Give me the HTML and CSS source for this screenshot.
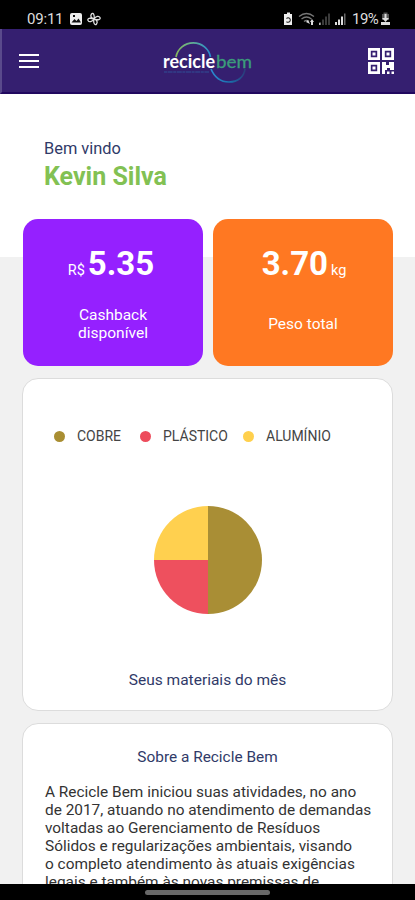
FILE: index.html
```html
<!DOCTYPE html>
<html lang="pt-BR">
<head>
  <meta charset="UTF-8">
  <meta name="viewport" content="width=device-width, initial-scale=1.0">
  <title>Recicle Bem</title>
  <link rel="stylesheet" href="styles.css">
</head>
<body>
  <div class="status-bar">
    <span class="clock">09:11</span>
    <svg class="status-left" width="34" height="16" viewBox="0 0 34 16">
      <rect x="1" y="2" width="12" height="12" rx="2" fill="#eee"/>
      <path d="M2.5 11.5 5.5 8l2 2 2-2.5 2.5 4z" fill="#111"/>
      <rect x="4" y="4" width="2" height="2" fill="#111"/>
      <g fill="none" stroke="#ddd" stroke-width="1.3">
        <path d="M25 8c-3-1-4-3-2.500-5S26 4 25 8c2-3 5-3.500 6-1.500S29 9.500 25 8c3 1 4 3 2.500 5S24 12 25 8c-2 3-5 3.500-6 1.500S21 6.500 25 8"/>
      </g>
    </svg>
    <svg class="status-right" width="68" height="16" viewBox="0 0 68 16">
      <path d="M3 3h2V1.500h3V3h2v11H2V3z" fill="#eee"/>
      <path d="M4.500 7.500a2.200 2.200 0 1 1 0 3" fill="none" stroke="#222" stroke-width="1.100"/>
      <g fill="none" stroke="#777" stroke-width="1.300">
        <path d="M17 5.500q7.500-6 15 0M19.500 8q5-4 10 0M22 10.500q2.500-2 5 0"/>
      </g>
      <path d="M24 11l2-2 2 4zM30 8l2 3h-1v3h-2v-3h-1z" fill="#ddd"/>
      <path d="M37 11h2v3h-2zM40 8.500h2V14h-2zM43 5.500h2V14h-2zM46 2.500h2V14h-2z" fill="#3b3b3b"/>
      <path d="M37 12h1.500v2H37z" fill="#bbb"/>
      <path d="M53 11h2v3h-2zM56 8.500h2V14h-2zM59 5.500h2V14h-2z" fill="#ddd"/>
      <path d="M62 2.500h1.500V14H62z" fill="#666"/>
    </svg>
    <span class="battery">19%</span>
    <svg class="battery-icon" width="9" height="14" viewBox="0 0 9 14">
      <path d="M2.500 2V.5h4V2H8v6H1V2z" fill="#555"/>
      <path d="M3.500 2h2v4H8L4.500 10 1 6h2.500zM0 10h9v3H0z" fill="#ddd"/>
    </svg>
  </div>

  <header>
    <svg class="menu" width="20" height="16" viewBox="0 0 20 16">
      <path d="M0 2h20M0 8h20M0 14h20" stroke="#fff" stroke-width="2"/>
    </svg>
    <svg class="logo" width="96" height="50" viewBox="0 0 96 50">
      <defs>
        <linearGradient id="arc-top" x1="0" x2="1">
          <stop offset="0" stop-color="#86b85c"/>
          <stop offset=".5" stop-color="#5fae97"/>
          <stop offset="1" stop-color="#2689ce"/>
        </linearGradient>
        <linearGradient id="arc-bottom" x1="0" x2="1">
          <stop offset="0" stop-color="#2b8bd2"/>
          <stop offset=".6" stop-color="#1a6ca8"/>
          <stop offset="1" stop-color="#2b3c7b"/>
        </linearGradient>
      </defs>
      <path d="M16 20a17.500 17 0 0 1 34.500 0" fill="none" stroke="url(#arc-top)" stroke-width="1.700"/>
      <path d="M51 32c3 7 9 13 18 13s15-5 16-13" fill="none" stroke="url(#arc-bottom)" stroke-width="1.700"/>
      <text class="logo-text" x="3" y="30.500" textLength="52" lengthAdjust="spacingAndGlyphs" fill="#fff">recicle</text>
      <text class="logo-text light" x="56" y="30.500" textLength="36" lengthAdjust="spacingAndGlyphs" fill="#3b9b7b">bem</text>
      <path d="M4 35h45" stroke="#315096" stroke-width="1" stroke-dasharray="3 .6 5 .6"/>
    </svg>
    <svg class="qr" width="28" height="28" viewBox="0 0 28 28">
      <g fill="none" stroke="#fff" stroke-width="2.800">
        <path d="M2.400 2.400h9.200v9.200H2.400zM16.400 2.400h9.200v9.200h-9.200zM2.400 16.400h9.200v9.200H2.400z"/>
      </g>
      <path d="M5.500 5.500h3v3h-3zM19.500 5.500h3v3h-3zM5.500 19.500h3v3h-3zM15 15h4v3h3v-3h5v8h-4v-2h-3v2h-2v4h-3zM20 24.500h2.500V27H20zM24.500 24.500H27V27h-2.500z" fill="#fff"/>
    </svg>
  </header>

  <main>
    <section class="welcome">
      <p class="hello">Bem vindo</p>
      <h1>Kevin Silva</h1>
    </section>

    <div class="totals">
      <section class="total cashback">
        <p class="value"><small>R$</small><b>5.35</b></p>
        <p class="label">Cashback<br>disponível</p>
      </section>
      <section class="total weight">
        <p class="value"><b>3.70</b><small>kg</small></p>
        <p class="label">Peso total</p>
      </section>
    </div>

    <section class="card materials">
      <ul class="legend">
        <li class="copper">COBRE</li>
        <li class="plastic">PLÁSTICO</li>
        <li class="aluminium">ALUMÍNIO</li>
      </ul>
      <div class="pie"></div>
      <p class="caption">Seus materiais do mês</p>
    </section>

    <section class="card about">
      <h2>Sobre a Recicle Bem</h2>
      <p>A Recicle Bem iniciou suas atividades, no ano<br>
        de 2017, atuando no atendimento de demandas<br>
        voltadas ao Gerenciamento de Resíduos<br>
        Sólidos e regularizações ambientais, visando<br>
        o completo atendimento às atuais exigências<br>
        legais e também às novas premissas de</p>
    </section>
  </main>

  <div class="nav-bar"><span class="handle"></span></div>
</body>
</html>
```
FILE: styles.css
```css
* {
    box-sizing: border-box;
}
body {
    margin: 0;
    height: 900px;
    display: flex;
    flex-direction: column;
    overflow: hidden;
    font-family: Roboto, sans-serif;
    background-color: #000;
}
h1, h2, p, ul {
    margin: 0;
    padding: 0;
    font-weight: normal;
}
svg {
    display: block;
    flex: none;
}

/* Status bar */
.status-bar {
    flex: none;
    height: 29px;
    padding: 9px 25px 0 27px;
    display: flex;
    align-items: center;
    color: #ddd;
    font-size: 15px;
    line-height: 20px;
}
.clock {
    width: 36px;
    letter-spacing: -0.2px;
}
.status-left {
    margin-left: 6px;
}
.status-right {
    margin-left: auto;
}
.battery {
    width: 27px;
    margin-left: 2px;
    letter-spacing: -0.5px;
}
.battery-icon {
    margin-left: 2px;
}

/* Header */
header {
    flex: none;
    height: 65px;
    padding: 0 20px 0 17px;
    display: flex;
    align-items: center;
    justify-content: space-between;
    background-color: #351f70;
    border-left: 2px solid #5a4a8c;
    border-bottom: 2px solid #21085f;
}
.logo {
    margin-left: 9px;
    margin-top: 2px;
}
.logo-text {
    font-family: Lato, sans-serif;
    font-size: 18px;
    font-weight: bold;
}
.light {
    font-weight: normal;
    stroke: #3b9b7b;
    stroke-width: 0.3px;
}

/* Content */
main {
    flex: 1;
    min-height: 0;
    overflow: hidden;
    padding: 0 22px;
    background: linear-gradient(#fff 163px, #f1f1f1 163px);
}
.welcome {
    height: 125px;
    padding: 45px 0 0 22px;
}
.hello {
    font-size: 16.4px;
    line-height: 20px;
    color: #303a68;
}
h1 {
    font-size: 25px;
    line-height: 36px;
    font-weight: bold;
    color: #82c153;
}
.totals {
    display: flex;
    gap: 10px;
    padding: 0 0 0 1px;
}
.total {
    width: 180px;
    height: 147px;
    border-radius: 15px;
    color: #fff;
    text-align: center;
    display: flex;
    flex-direction: column;
}
.cashback {
    background-color: #9520ff;
}
.weight {
    background-color: #ff7822;
}
.value {
    height: 82px;
    padding-top: 25px;
    display: flex;
    align-items: baseline;
    justify-content: center;
    gap: 3px;
}
.cashback .value {
    padding-right: 4px;
}
.weight .value {
    padding-left: 2px;
}
.value b {
    font-size: 33px;
    line-height: 40px;
}
.value small {
    font-size: 14.5px;
}
.label {
    height: 45px;
    display: flex;
    align-items: center;
    justify-content: center;
    font-size: 15.5px;
    line-height: 18px;
}
.card {
    background-color: #fff;
    border: 1px solid #dcdcdc;
    border-radius: 16px;
}

/* Materials chart */
.materials {
    height: 333px;
    margin-top: 12px;
    display: flex;
    flex-direction: column;
    align-items: center;
    color: #303a68;
}
.legend {
    align-self: flex-start;
    list-style-type: none;
    display: flex;
    padding: 47px 0 0 31px;
    font-size: 14px;
    line-height: 20px;
    color: #444;
}
.legend li {
    display: flex;
    align-items: center;
}
.legend li::before {
    content: "";
    width: 11px;
    height: 11px;
    margin-right: 12px;
    border-radius: 50%;
}
.copper {
    width: 86px;
}
.plastic {
    width: 103px;
}
.copper::before {
    background-color: #a98e32;
}
.plastic::before {
    background-color: #ed4c5c;
}
.aluminium::before {
    background-color: #ffd04d;
}
.pie {
    width: 108px;
    height: 108px;
    margin-top: 60px;
    border-radius: 50%;
    background: conic-gradient(#a98e35 50%, #ee505e 50% 75%, #ffd04f 75%);
}
.caption {
    margin-top: 56px;
    font-size: 15.5px;
    line-height: 20px;
}

/* About */
.about {
    height: 300px;
    margin-top: 12px;
    padding: 22px 0 0 22px;
    font-size: 15.4px;
    line-height: 18px;
    white-space: nowrap;
    color: #333;
}
.about h2 {
    padding-right: 22px;
    margin-bottom: 15px;
    font-size: 15.4px;
    line-height: 22px;
    text-align: center;
    color: #303a68;
}

.nav-bar {
    flex: none;
    height: 16px;
    display: flex;
    justify-content: center;
    padding-top: 6px;
}
.handle {
    width: 125px;
    height: 5px;
    border-radius: 3px;
    background-color: #686868;
}
```
